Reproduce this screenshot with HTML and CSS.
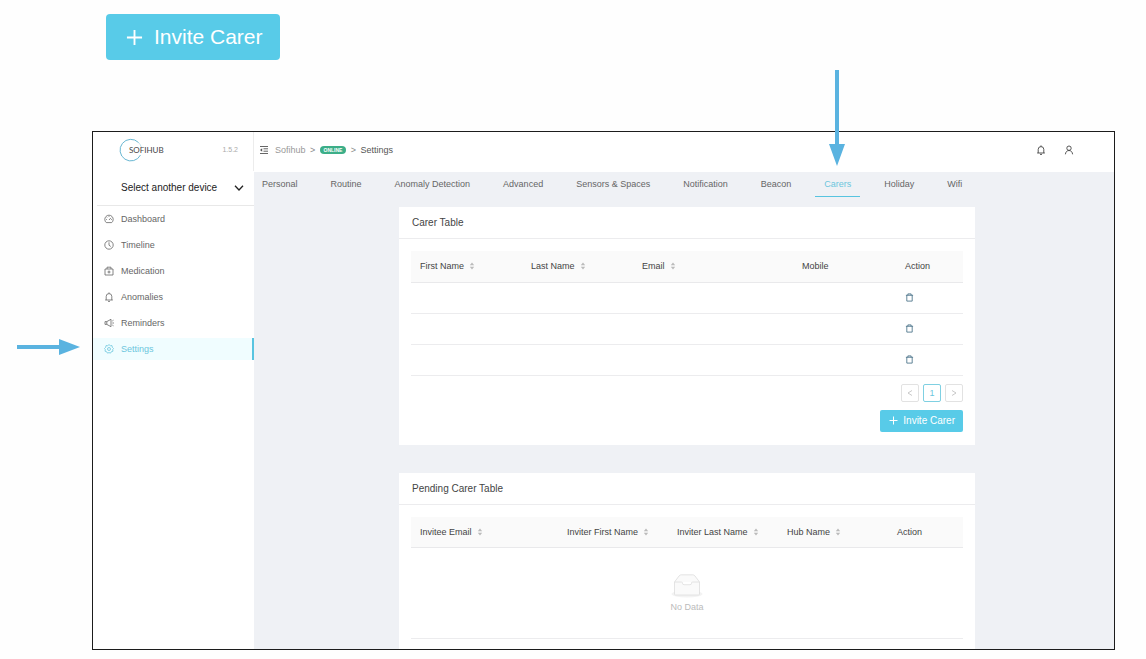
FILE: index.html
```html
<!DOCTYPE html>
<html lang="en">
<head>
  <meta charset="utf-8">
  <title>Sofihub - Carers</title>
  <link rel="stylesheet" href="styles.css">
</head>
<body>
  <!-- shared icons -->
  <svg class="symbols" aria-hidden="true">
    <symbol id="plus" viewBox="0 0 18 18"><path d="M9 1v16M1 9h16"/></symbol>
    <symbol id="sorter" viewBox="0 0 6 8"><path d="M3 0.5L5.2 3.2H0.8zM3 7.5L5.2 4.8H0.8z"/></symbol>
    <symbol id="trash" viewBox="0 0 10 10"><path d="M1 2.5h8M3.2 2.5V1h3.6v1.5M2 2.5V9h6V2.5"/></symbol>
    <symbol id="bell" viewBox="0 0 10 10"><path d="M2.2 8V4.4a2.8 2.8 0 0 1 5.6 0V8M1.2 8h7.6M5 0.4v1.2M4 9.4h2"/></symbol>
  </svg>

  <button type="button" class="btn btn-large"><svg><use href="#plus"/></svg>Invite Carer</button>

  <div class="app">
    <aside class="sidebar">
      <div class="brand">
        <div class="logo">
          <svg viewBox="0 0 24 24"><path d="M19.500 4.500A10.800 10.800 0 1 0 21.500 17"/><path class="faint" d="M19.500 4.500A10.800 10.800 0 0 1 22.300 9"/></svg>
          <span>SOFIHUB</span>
        </div>
        <span class="version">1.5.2</span>
      </div>
      <div class="device">
        <select aria-label="Device">
          <option>Select another device</option>
        </select>
        <svg viewBox="0 0 10 6"><path d="M1 0.800L5 5L9 0.800"/></svg>
      </div>
      <nav class="menu">
        <a href="#"><svg viewBox="0 0 10 10"><path d="M2.300 8.600A4.200 4.200 0 1 1 7.700 8.600zM5 6L7 3.800M2.200 5.500h.8M5 2.200v.8M2.900 3.300l.5.500M7.100 5.500h.8"/></svg>Dashboard</a>
        <a href="#"><svg viewBox="0 0 10 10"><circle cx="5" cy="5" r="4.200"/><path d="M5 2.300V5.200L6.800 6.500"/></svg>Timeline</a>
        <a href="#"><svg viewBox="0 0 10 10"><path d="M1 3h8v6H1zM3 3V1.200h4V3M5 4.500v3M3.500 6h3"/></svg>Medication</a>
        <a href="#"><svg><use href="#bell"/></svg>Anomalies</a>
        <a href="#"><svg viewBox="0 0 10 10"><path d="M1 3.600h1.800L7 1.300v7.400L2.800 6.400H1zM2.800 3.600v2.800M8.300 5H10M8.300 3l1.200-.8M8.300 7l1.200.8"/></svg>Reminders</a>
        <a href="#" class="active">
          <svg viewBox="0 0 10 10"><path d="M5 .6l1.300 1.100 1.700-.1.300 1.700 1.200 1.200-.8 1.100.3 1.600-1.600.5-.9 1.400L5 8.600l-1.500.5-.9-1.400L1 7.200l.3-1.600L.5 4.500l1.200-1.200.3-1.700 1.700.1z"/><circle cx="5" cy="5" r="1.500"/></svg>Settings
          <svg class="arrow arrow-right" viewBox="0 0 63 16"><path d="M0 6h42V0l21 8-21 8v-6H0z"/></svg>
        </a>
      </nav>
    </aside>

    <main class="main">
      <header class="topbar">
        <button type="button" class="icon-btn fold" aria-label="Toggle menu"><svg viewBox="0 0 8 8"><path d="M0 .5h8M3.500 2.800H8M3.500 5.200H8M0 7.500h8"/><path class="solid" d="M2.200 2.200v3.600L0 4z"/></svg></button>
        <a href="#">Sofihub</a>
        <span class="sep">&gt;</span>
        <span class="badge">ONLINE</span>
        <span class="sep">&gt;</span>
        <span class="current">Settings</span>
        <div class="tools">
          <button type="button" class="icon-btn" aria-label="Notifications"><svg><use href="#bell"/></svg></button>
          <button type="button" class="icon-btn" aria-label="Account"><svg viewBox="0 0 10 10"><circle cx="5" cy="3.200" r="2.200"/><path d="M1.400 9.300C1.600 7 3 5.500 5 5.500S8.400 7 8.600 9.300"/></svg></button>
        </div>
      </header>

      <nav class="tabs">
        <a href="#">Personal</a>
        <a href="#">Routine</a>
        <a href="#">Anomaly Detection</a>
        <a href="#">Advanced</a>
        <a href="#">Sensors &amp; Spaces</a>
        <a href="#">Notification</a>
        <a href="#">Beacon</a>
        <a href="#" class="active">Carers
          <svg class="arrow arrow-down" viewBox="0 0 16 96"><path d="M6 0h4v74h6L8 96 0 74h6z"/></svg>
        </a>
        <a href="#">Holiday</a>
        <a href="#">Wifi</a>
      </nav>

      <div class="content">
        <section class="card">
          <h2>Carer Table</h2>
          <div class="card-body">
            <table class="carers">
              <thead>
                <tr>
                  <th><button type="button" class="sort">First Name<svg><use href="#sorter"/></svg></button></th>
                  <th><button type="button" class="sort">Last Name<svg><use href="#sorter"/></svg></button></th>
                  <th><button type="button" class="sort">Email<svg><use href="#sorter"/></svg></button></th>
                  <th>Mobile</th>
                  <th>Action</th>
                </tr>
              </thead>
              <tbody>
                <tr><td></td><td></td><td></td><td></td><td><button type="button" class="icon-btn delete" aria-label="Delete"><svg><use href="#trash"/></svg></button></td></tr>
                <tr><td></td><td></td><td></td><td></td><td><button type="button" class="icon-btn delete" aria-label="Delete"><svg><use href="#trash"/></svg></button></td></tr>
                <tr><td></td><td></td><td></td><td></td><td><button type="button" class="icon-btn delete" aria-label="Delete"><svg><use href="#trash"/></svg></button></td></tr>
              </tbody>
            </table>
            <div class="pagination">
              <button type="button" disabled aria-label="Previous"><svg viewBox="0 0 6 8"><path d="M5 1.500L1 4l4 2.500"/></svg></button>
              <button type="button" class="active">1</button>
              <button type="button" disabled aria-label="Next"><svg viewBox="0 0 6 8"><path d="M1 1.500L5 4 1 6.500"/></svg></button>
            </div>
            <div class="actions">
              <button type="button" class="btn"><svg><use href="#plus"/></svg>Invite Carer</button>
            </div>
          </div>
        </section>

        <section class="card">
          <h2>Pending Carer Table</h2>
          <div class="card-body">
            <table class="pending">
              <thead>
                <tr>
                  <th><button type="button" class="sort">Invitee Email<svg><use href="#sorter"/></svg></button></th>
                  <th><button type="button" class="sort">Inviter First Name<svg><use href="#sorter"/></svg></button></th>
                  <th><button type="button" class="sort">Inviter Last Name<svg><use href="#sorter"/></svg></button></th>
                  <th><button type="button" class="sort">Hub Name<svg><use href="#sorter"/></svg></button></th>
                  <th>Action</th>
                </tr>
              </thead>
              <tbody>
                <tr>
                  <td colspan="5" class="empty">
                    <svg viewBox="0 0 32 24"><ellipse cx="16" cy="20" rx="15.500" ry="3.500"/><path d="M3.500 8L8 2Q9 .8 10.500.8h11Q23 .8 24 2L28.500 8v12q0 1-1 1h-23q-1 0-1-1zM3.500 8h7q1 0 1 1.200 0 1.500 1.500 1.500h6q1.500 0 1.500-1.500 0-1.200 1-1.200h7"/></svg>
                    <p>No Data</p>
                  </td>
                </tr>
              </tbody>
            </table>
          </div>
        </section>
      </div>
    </main>
  </div>
</body>
</html>
```

FILE: styles.css
```css
* {
  box-sizing: border-box;
}

body {
  margin: 0;
  padding: 14px 31px 9px 92px;
  background: #fefefe;
  color: #555;
  font-family: "Liberation Sans", Arial, sans-serif;
  font-size: 9px;
  line-height: 12px;
}

button,
select {
  margin: 0;
  padding: 0;
  border: 0;
  background: none;
  color: inherit;
  font: inherit;
}

a {
  color: inherit;
  text-decoration: none;
}

svg {
  display: block;
  flex: none;
  fill: none;
  stroke: currentColor;
}

.symbols {
  position: absolute;
  width: 0;
  height: 0;
}

.btn {
  display: flex;
  align-items: center;
  gap: 5px;
  height: 22px;
  padding: 0 8px 0 9px;
  border-radius: 2px;
  background: #58cbe8;
  color: #fff;
  font-size: 10px;
}

.btn svg {
  width: 9px;
  height: 9px;
  stroke-width: 2;
}

.btn-large {
  gap: 11px;
  height: 46px;
  margin: 0 0 71px 14px;
  padding: 0 17px 0 20px;
  border-radius: 4px;
  font-size: 21px;
}

.btn-large svg {
  width: 17px;
  height: 17px;
}

.app {
  display: flex;
  border: 1px solid #1c1c1c;
  background: #eff1f5;
}

/* sidebar */
.sidebar {
  width: 161px;
  flex: none;
  background: #fff;
}

.brand {
  display: flex;
  align-items: center;
  justify-content: space-between;
  height: 39px;
  padding: 0 15px 3px 26px;
  border-right: 1px solid #ececec;
}

.logo {
  display: flex;
  align-items: center;
  color: #444;
  font-family: Lato, sans-serif;
  font-size: 8px;
}

.logo svg {
  width: 24px;
  height: 24px;
  margin-right: -14px;
  color: #69b7d2;
}

.logo .faint {
  stroke-width: 0.4;
}

.version {
  color: #aaa;
  font-size: 7px;
}

.device {
  display: flex;
  align-items: center;
  height: 35px;
  margin-left: 4px;
  padding: 0 10px 0 24px;
  border-bottom: 1px solid #e8e8e8;
}

.device select {
  flex: 1;
  appearance: none;
  color: #222;
  font-size: 10px;
}

.device svg {
  width: 10px;
  height: 6px;
  color: #222;
  stroke-width: 1.3;
}

.menu {
  display: flex;
  flex-direction: column;
  gap: 4px;
  padding-top: 2px;
}

.menu a {
  position: relative;
  display: flex;
  align-items: center;
  gap: 7px;
  height: 22px;
  padding-left: 11px;
  color: #666;
}

.menu svg {
  width: 10px;
  height: 10px;
  stroke-width: 0.8;
}

.menu .active {
  border-right: 2px solid #58c4e0;
  background: #f0fdff;
  color: #6cc6dd;
}

/* pointers to the selected menu item and tab */
.arrow,
.menu .arrow {
  position: absolute;
  fill: #5ab3e0;
  stroke: none;
}

.menu .arrow-right {
  top: 1px;
  right: 100%;
  width: 63px;
  height: 16px;
  margin-right: 13px;
}

.arrow-down {
  bottom: 100%;
  left: 50%;
  width: 16px;
  height: 96px;
  margin: 0 0 6px -9px;
}

/* top bar */
.main {
  flex: 1;
  min-width: 0;
}

.topbar {
  display: flex;
  align-items: center;
  height: 40px;
  padding: 0 40px 4px 6px;
  background: #fff;
}

.topbar a {
  margin-left: 7px;
  color: #999;
}

.icon-btn svg {
  width: 10px;
  height: 10px;
  stroke-width: 0.9;
}

.fold svg {
  width: 8px;
  height: 8px;
}

.fold .solid {
  fill: currentColor;
  stroke: none;
}

.sep {
  width: 14px;
  color: #888;
  text-align: center;
}

.badge {
  padding: 0 4px;
  border-radius: 4px;
  background: #3cae88;
  color: #fff;
  font-size: 5px;
  font-weight: bold;
  line-height: 8px;
}

.tools {
  display: flex;
  gap: 18px;
  margin-left: auto;
  color: #444;
}

.tabs {
  display: flex;
  gap: 15px;
  height: 25px;
}

.tabs a {
  position: relative;
  padding: 6px 9px 0 8px;
  color: #666;
  white-space: nowrap;
}

.tabs a + a {
  padding-left: 9px;
}

.tabs .active {
  border-bottom: 1px solid #58c4e0;
  color: #6cc6dd;
}

/* cards */
.content {
  display: flex;
  flex-direction: column;
  gap: 28px;
  padding: 10px 139px 0 145px;
}

.card {
  background: #fff;
}

.card h2 {
  margin: 0;
  padding: 10px 13px 9px;
  border-bottom: 1px solid #ececee;
  color: #444;
  font-size: 10px;
  font-weight: normal;
}

.card-body {
  padding: 12px 12px 10px;
}

table {
  width: 100%;
  border-collapse: collapse;
  table-layout: fixed;
}

th {
  height: 31px;
  padding: 0 0 0 9px;
  border-bottom: 1px solid #e9e9eb;
  background: #fafafa;
  color: #444;
  font-weight: normal;
  text-align: left;
  white-space: nowrap;
}

td {
  height: 31px;
  padding: 0 0 0 9px;
  border-bottom: 1px solid #ececee;
}

.carers th:nth-child(1),
.carers th:nth-child(2) {
  width: 111px;
}

.carers th:nth-child(3) {
  width: 160px;
}

.carers th:nth-child(4) {
  width: 103px;
}

.pending th:nth-child(1) {
  width: 147px;
}

.pending th:nth-child(2),
.pending th:nth-child(3),
.pending th:nth-child(4) {
  width: 110px;
}

.sort {
  display: flex;
  align-items: center;
  gap: 5px;
}

.sort svg {
  width: 6px;
  height: 8px;
  fill: #bbb;
  stroke: none;
}

.delete {
  display: block;
  color: #3f6a82;
}

.delete svg {
  width: 9px;
  height: 9px;
}

.pagination {
  display: flex;
  justify-content: flex-end;
  gap: 4px;
  margin-top: 8px;
}

.pagination button {
  display: flex;
  align-items: center;
  justify-content: center;
  width: 18px;
  height: 18px;
  border: 1px solid #e2e2e2;
  border-radius: 2px;
  color: #bbb;
}

.pagination .active {
  border-color: #7fd0e2;
  color: #6cc6dd;
}

.pagination svg {
  width: 6px;
  height: 8px;
  stroke-width: 0.8;
}

.actions {
  display: flex;
  justify-content: flex-end;
  margin: 8px 0 3px;
}

.empty {
  height: 91px;
  padding: 0;
  color: #bbb;
  text-align: center;
}

.empty svg {
  width: 32px;
  height: 24px;
  margin: 0 auto 3px;
  color: #ddd;
  stroke-width: 0.8;
  fill: #fafafa;
}

.empty ellipse {
  fill: #f3f3f3;
  stroke: none;
}

.empty p {
  margin: 0;
}
```
